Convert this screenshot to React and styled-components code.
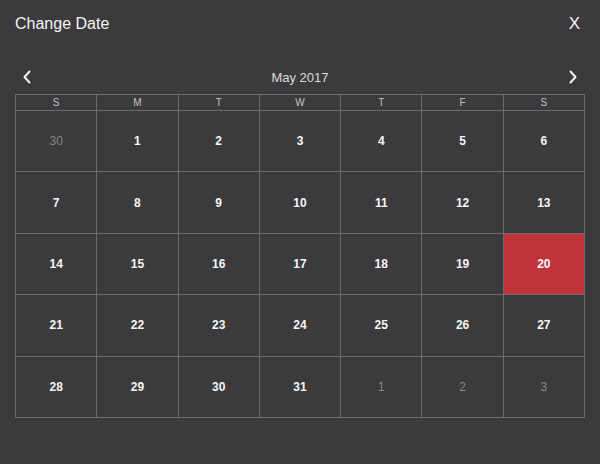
import React from 'react'
import styled, { createGlobalStyle } from 'styled-components'

const GlobalStyle = createGlobalStyle`
  html, body {
    margin: 0;
    padding: 0;
    background: #3b3a3c;
  }
  body {
    font-family: "Liberation Sans", Arial, sans-serif;
  }
`

const days = ['S', 'M', 'T', 'W', 'T', 'F', 'S']

// April 30 .. June 3
const cells = [
  { n: 30, out: true },
  ...Array.from({ length: 31 }, (_, i) => ({ n: i + 1 })),
  { n: 1, out: true },
  { n: 2, out: true },
  { n: 3, out: true },
]

const Chevron = ({ dir }) => (
  <svg width="10" height="14" viewBox="0 0 10 14">
    <path
      d={dir === 'left' ? 'M7.5 1.5 L2.5 7 L7.5 12.5' : 'M2.5 1.5 L7.5 7 L2.5 12.5'}
      fill="none"
      stroke="#f2f2f2"
      strokeWidth="2"
      strokeLinecap="round"
      strokeLinejoin="round"
    />
  </svg>
)

const App = () => {
  return (
    <Wrap>
      <GlobalStyle />
      <TopBar>
        <Title>Change Date</Title>
        <Close>X</Close>
      </TopBar>
      <Nav>
        <NavButton><Chevron dir="left" /></NavButton>
        <Month>May 2017</Month>
        <NavButton><Chevron dir="right" /></NavButton>
      </Nav>
      <Grid>
        {days.map((d, i) => (
          <DayHead key={i}>{d}</DayHead>
        ))}
        {cells.map((c, i) => (
          <Cell key={i} $out={c.out} $selected={!c.out && c.n === 20}>
            {c.n}
          </Cell>
        ))}
      </Grid>
    </Wrap>
  )
}

const Wrap = styled.div`
  width: 600px;
  height: 464px;
  box-sizing: border-box;
  padding: 0 15px;
  background: #3b3a3c;
  color: #fff;
`

const TopBar = styled.div`
  display: flex;
  justify-content: space-between;
  align-items: center;
  height: 48px;
`

const Title = styled.div`
  font-size: 16px;
  color: #f4f4f4;
`

const Close = styled.div`
  font-size: 17px;
  color: #f4f4f4;
  margin-right: 5px;
`

const Nav = styled.div`
  display: flex;
  justify-content: space-between;
  align-items: center;
  height: 34px;
  margin-top: 12px;
  padding: 0 4px;
`

const NavButton = styled.div`
  display: flex;
  align-items: center;
  justify-content: center;
  width: 16px;
  height: 16px;
  cursor: pointer;
`

const Month = styled.div`
  font-size: 13px;
  color: #dcdcdc;
`

const Grid = styled.div`
  display: grid;
  grid-template-columns: repeat(7, 1fr);
  grid-template-rows: 15px repeat(5, 60.4px);
  gap: 1px;
  padding: 1px;
  background: #6c6b6d;
`

const DayHead = styled.div`
  display: flex;
  align-items: center;
  justify-content: center;
  background: #3b3a3c;
  font-size: 10px;
  color: #c4c4c4;
`

const Cell = styled.div`
  display: flex;
  align-items: center;
  justify-content: center;
  background: ${(p) => (p.$selected ? '#c03338' : '#3b3a3c')};
  font-size: 12px;
  font-weight: ${(p) => (p.$out ? 'normal' : 'bold')};
  color: ${(p) => (p.$out ? '#8a898b' : '#f6f6f6')};
`

export default App
